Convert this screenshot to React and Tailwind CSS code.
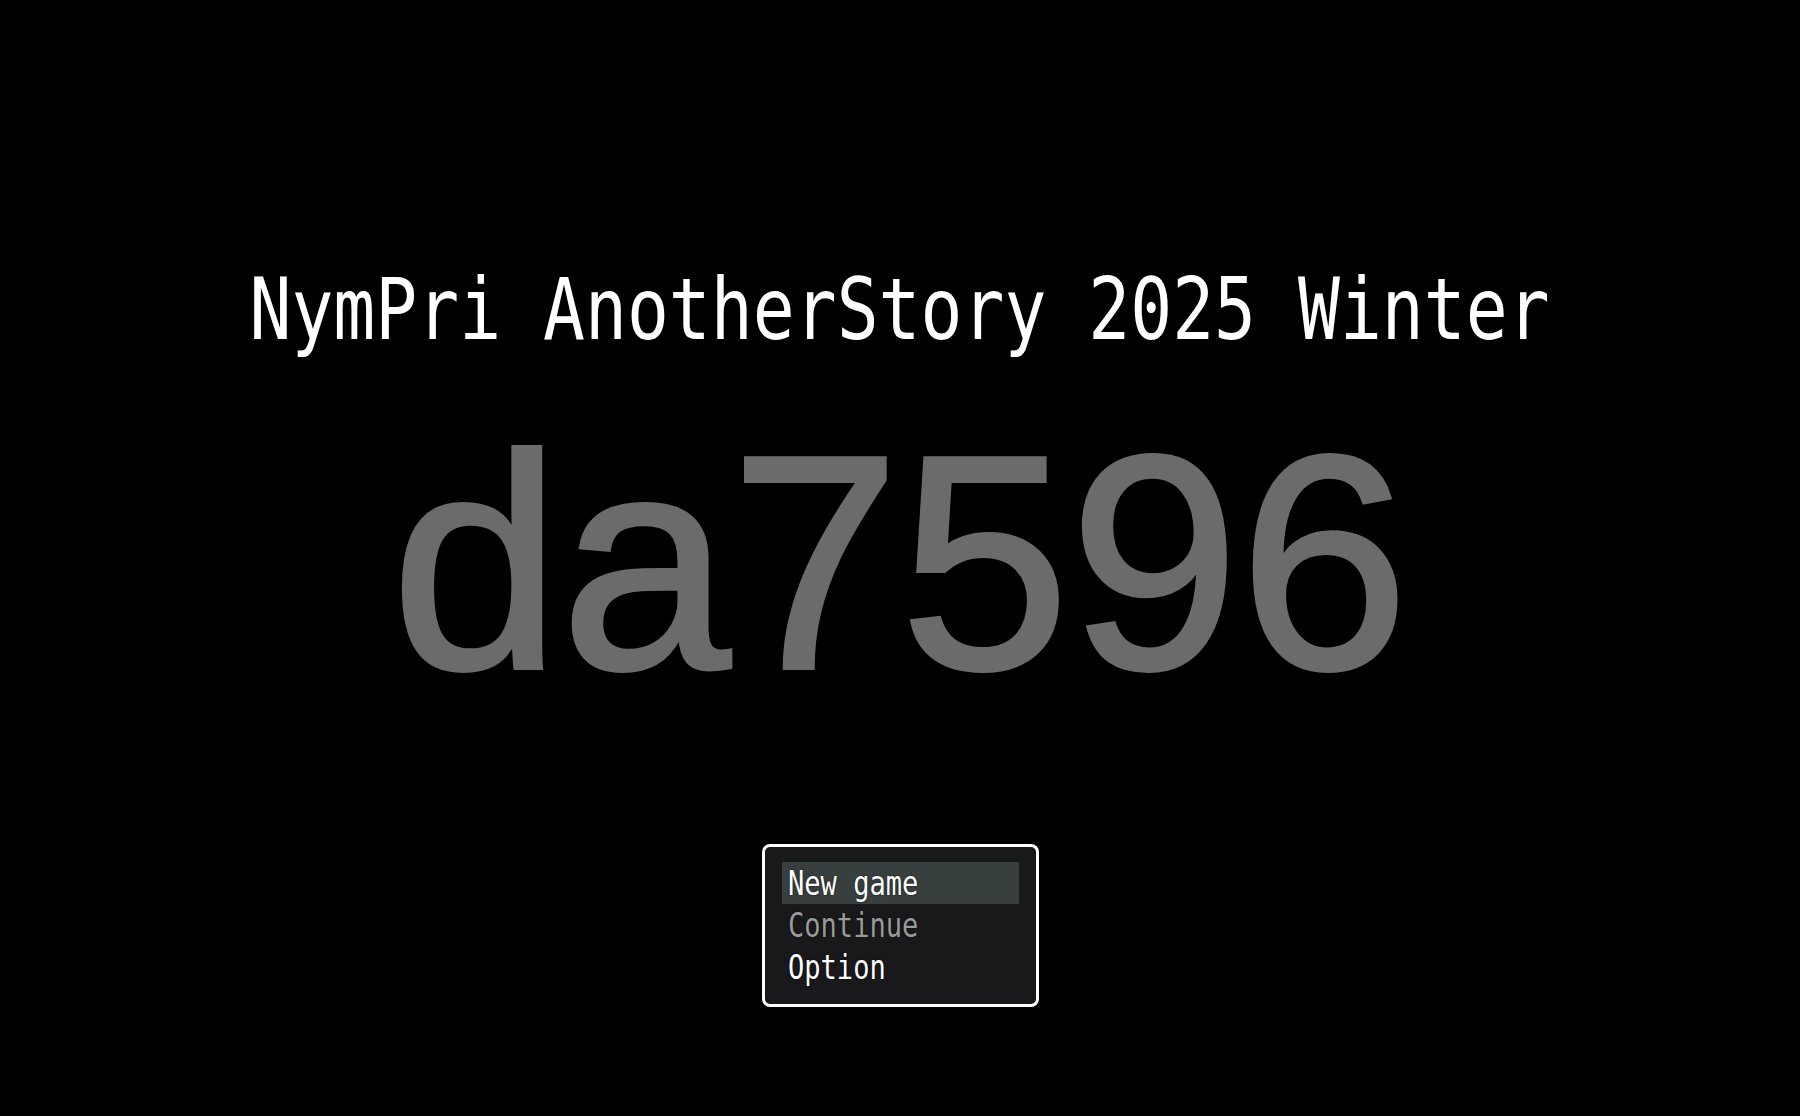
import React from 'react';

const menuItems = [
  { label: 'New game', active: true, disabled: false },
  { label: 'Continue', active: false, disabled: true },
  { label: 'Option', active: false, disabled: false },
];

const mono = { fontFamily: '"DejaVu Sans Mono", "Liberation Mono", monospace' };

export default function App() {
  return (
    <div className="w-[1800px] h-[1116px] bg-black overflow-hidden flex flex-col items-center">
      {/* Title */}
      <div className="mt-[266px] h-[86px] text-[86px] leading-none text-white whitespace-nowrap scale-x-[0.81]" style={mono}>
        NymPri AnotherStory 2025 Winter
      </div>

      {/* Big code */}
      <div
        className="mt-[58px] h-[305px] text-[305px] leading-none text-[#6b6b6b] whitespace-nowrap [-webkit-text-stroke:4px_#6b6b6b]"
        style={{ fontFamily: '"Liberation Sans", Arial, sans-serif' }}
      >
        da7596
      </div>

      {/* Title menu */}
      <div className="mt-[129px] w-[277px] h-[163px] rounded-[8px] border-[3px] border-white bg-[#19191b] pt-[15px] px-[17px] flex flex-col">
        {menuItems.map((item) => (
          <div
            key={item.label}
            className={`h-[42px] flex items-center px-[6px] ${item.active ? 'bg-[#37403e]' : ''}`}
          >
            <span
              className={`text-[33px] leading-none whitespace-nowrap origin-left scale-x-[0.82] [text-shadow:0_0_2px_rgba(0,0,0,0.9)] ${item.disabled ? 'text-[#9a9a9a]' : 'text-white'}`}
              style={mono}
            >
              {item.label}
            </span>
          </div>
        ))}
      </div>
    </div>
  );
}
